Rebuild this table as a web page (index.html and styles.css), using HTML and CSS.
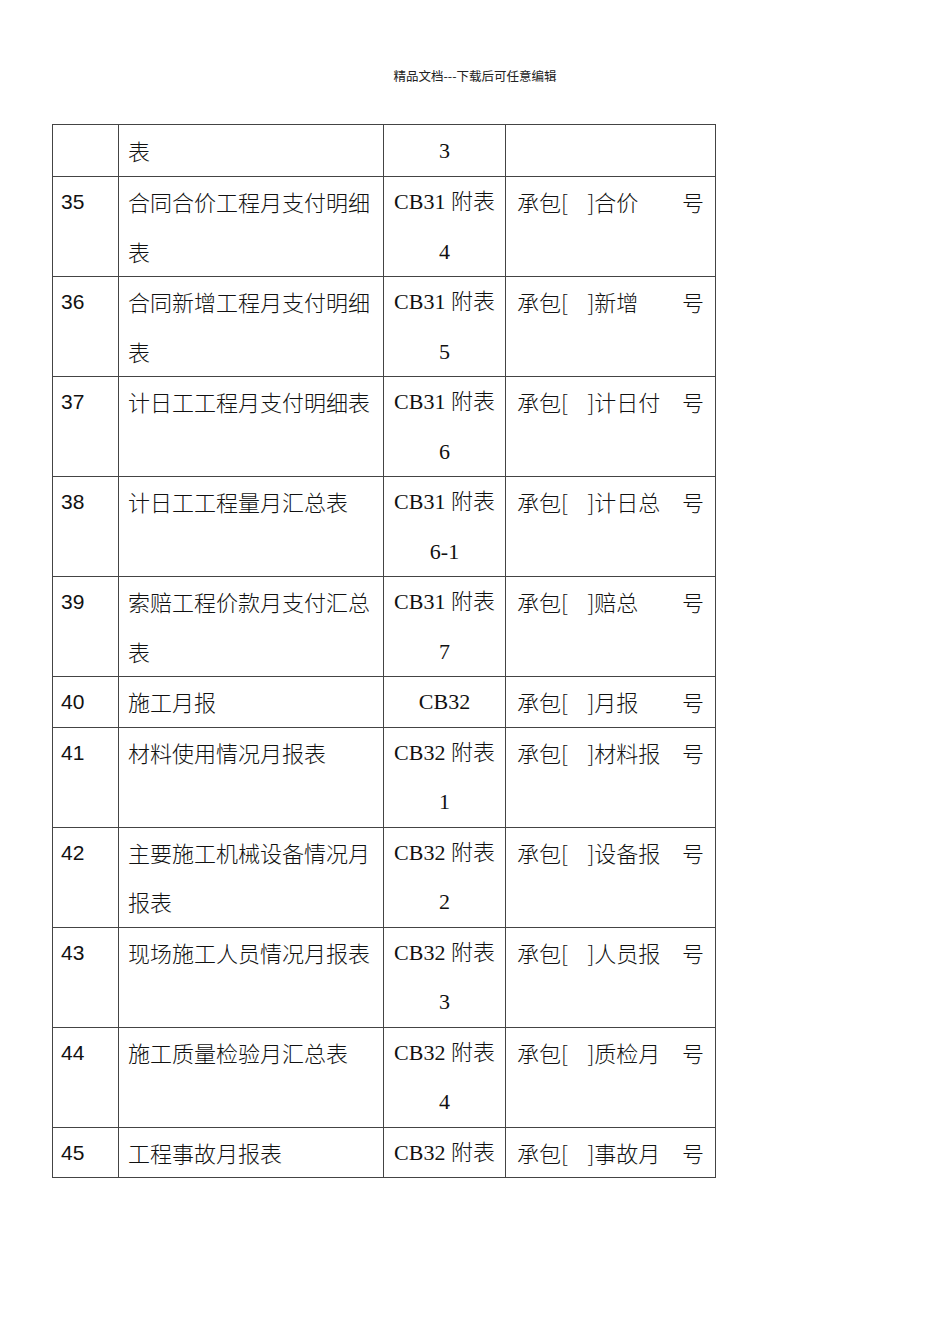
FILE: index.html
```html
<!DOCTYPE html>
<html lang="zh">
<head>
<meta charset="utf-8">
<link rel="stylesheet" href="styles.css">
</head>
<body>
<div class="page">
  <div class="header">精品文档---下载后可任意编辑</div>
  <table class="doc">
    <colgroup>
      <col class="c1"><col class="c2"><col class="c3"><col class="c4">
    </colgroup>
    <tr class="first"><td class="num"></td><td class="name">表</td><td class="code">3</td><td class="ref"></td></tr>
    <tr><td class="num">35</td><td class="name">合同合价工程月支付明细表</td><td class="code">CB31 附表<br>4</td><td class="ref"><div class="refin"><span>承包[&nbsp;&nbsp;&nbsp;&nbsp;]合价</span><span>号</span></div></td></tr>
    <tr><td class="num">36</td><td class="name">合同新增工程月支付明细表</td><td class="code">CB31 附表<br>5</td><td class="ref"><div class="refin"><span>承包[&nbsp;&nbsp;&nbsp;&nbsp;]新增</span><span>号</span></div></td></tr>
    <tr><td class="num">37</td><td class="name">计日工工程月支付明细表</td><td class="code">CB31 附表<br>6</td><td class="ref"><div class="refin"><span>承包[&nbsp;&nbsp;&nbsp;&nbsp;]计日付</span><span>号</span></div></td></tr>
    <tr><td class="num">38</td><td class="name">计日工工程量月汇总表</td><td class="code">CB31 附表<br>6-1</td><td class="ref"><div class="refin"><span>承包[&nbsp;&nbsp;&nbsp;&nbsp;]计日总</span><span>号</span></div></td></tr>
    <tr><td class="num">39</td><td class="name">索赔工程价款月支付汇总表</td><td class="code">CB31 附表<br>7</td><td class="ref"><div class="refin"><span>承包[&nbsp;&nbsp;&nbsp;&nbsp;]赔总</span><span>号</span></div></td></tr>
    <tr><td class="num">40</td><td class="name">施工月报</td><td class="code">CB32</td><td class="ref"><div class="refin"><span>承包[&nbsp;&nbsp;&nbsp;&nbsp;]月报</span><span>号</span></div></td></tr>
    <tr><td class="num">41</td><td class="name">材料使用情况月报表</td><td class="code">CB32 附表<br>1</td><td class="ref"><div class="refin"><span>承包[&nbsp;&nbsp;&nbsp;&nbsp;]材料报</span><span>号</span></div></td></tr>
    <tr><td class="num">42</td><td class="name">主要施工机械设备情况月报表</td><td class="code">CB32 附表<br>2</td><td class="ref"><div class="refin"><span>承包[&nbsp;&nbsp;&nbsp;&nbsp;]设备报</span><span>号</span></div></td></tr>
    <tr><td class="num">43</td><td class="name">现场施工人员情况月报表</td><td class="code">CB32 附表<br>3</td><td class="ref"><div class="refin"><span>承包[&nbsp;&nbsp;&nbsp;&nbsp;]人员报</span><span>号</span></div></td></tr>
    <tr><td class="num">44</td><td class="name">施工质量检验月汇总表</td><td class="code">CB32 附表<br>4</td><td class="ref"><div class="refin"><span>承包[&nbsp;&nbsp;&nbsp;&nbsp;]质检月</span><span>号</span></div></td></tr>
    <tr><td class="num">45</td><td class="name">工程事故月报表</td><td class="code">CB32 附表</td><td class="ref"><div class="refin"><span>承包[&nbsp;&nbsp;&nbsp;&nbsp;]事故月</span><span>号</span></div></td></tr>
  </table>
</div>
</body>
</html>
```

FILE: styles.css
```css
html, body {
  margin: 0;
  padding: 0;
  background: #ffffff;
}

.page {
  width: 950px;
  padding-top: 67px;
}

.header {
  text-align: center;
  font-family: "Noto Sans CJK SC", "Liberation Sans", sans-serif;
  font-size: 12.5px;
  line-height: 18px;
  color: #222;
  margin-bottom: 39px;
}

.doc {
  margin-left: 52px;
  border-collapse: collapse;
  table-layout: fixed;
  width: 664px;
  color: #111;
  font-family: "Liberation Serif", "Noto Sans CJK SC", serif;
  font-size: 22px;
}

.c1 { width: 66px; }
.c2 { width: 265px; }
.c3 { width: 122px; }
.c4 { width: 210px; }

.doc td {
  border: 1px solid #444;
  vertical-align: top;
  line-height: 49.5px;
  padding: 0;
}

.doc tr.first td {
  line-height: 51px;
}

.doc td.num {
  font-family: "Liberation Sans", "Noto Sans CJK SC", sans-serif;
  font-size: 21px;
  padding-left: 8px;
}

.doc td.name {
  font-family: "Noto Sans CJK SC", sans-serif;
  font-weight: 300;
  padding-left: 9px;
  padding-right: 8px;
}

.doc td.code {
  text-align: center;
  font-weight: 300;
  padding: 0 5px;
}

.doc td.ref {
  padding: 0 11px 0 11px;
  font-family: "Noto Sans CJK SC", sans-serif;
  font-weight: 300;
}

.refin {
  display: flex;
  justify-content: space-between;
}
```
